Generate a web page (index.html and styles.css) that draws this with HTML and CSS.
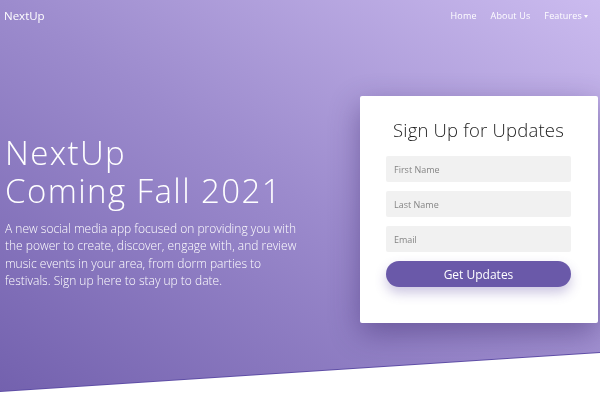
FILE: index.html
```html
<!DOCTYPE html>
<html>
<head>
<meta charset="utf-8">
<link rel="stylesheet" href="styles.css">
</head>
<body>
<div class="hero-wrap">
  <header class="hero">
    <nav class="navbar">
      <a class="brand">NextUp</a>
      <ul class="nav-links">
        <li>Home</li>
        <li>About Us</li>
        <li class="dropdown">Features<span class="caret"></span></li>
      </ul>
    </nav>
    <div class="hero-body">
      <div class="intro">
        <h1 class="title"><span class="line">NextUp</span><span class="line">Coming Fall 2021</span></h1>
        <p class="lead">A new social media app focused on providing you with the power to create, discover, engage with, and review music events in your area, from dorm parties to festivals. Sign up here to stay up to date.</p>
      </div>
      <form class="card">
        <h2 class="card-title">Sign Up for Updates</h2>
        <div class="field">First Name</div>
        <div class="field">Last Name</div>
        <div class="field">Email</div>
        <div class="btn">Get Updates</div>
      </form>
    </div>
  </header>
</div>
</body>
</html>
```

FILE: styles.css
```css
html, body {
  margin: 0;
  padding: 0;
  background: #ffffff;
  font-family: "Open Sans", "DejaVu Sans", sans-serif;
}
.hero-wrap {
  filter: drop-shadow(0 1px 0 #5f4ea6);
}
.hero {
  height: 392px;
  background: linear-gradient(to top right, #7361ae 0%, #9c8bcd 50%, #cbbbef 100%);
  clip-path: polygon(0 0, 100% 0, 100% 352px, 0 391px);
  color: #ffffff;
}
.navbar {
  display: flex;
  align-items: center;
  justify-content: space-between;
  height: 30px;
  padding: 0 12px 0 4px;
}
.brand {
  font-size: 11.5px;
  font-weight: 400;
}
.nav-links {
  display: flex;
  gap: 14px;
  list-style: none;
  margin: 0;
  padding: 0;
  font-size: 9px;
  letter-spacing: 0.15px;
}
.caret {
  display: inline-block;
  width: 0;
  height: 0;
  border-left: 2.5px solid transparent;
  border-right: 2.5px solid transparent;
  border-top: 3px solid #ffffff;
  vertical-align: middle;
  margin-left: 2px;
}
.hero-body {
  display: grid;
  grid-template-columns: 1fr 238px;
  column-gap: 20px;
  padding: 66px 2px 0 5px;
}
.intro {
  padding-top: 38px;
}
.title {
  margin: 0;
  font-size: 33px;
  font-weight: 300;
  letter-spacing: 1.4px;
}
.line {
  display: block;
  line-height: 38px;
}
.lead {
  margin: 10px 0 0;
  font-size: 12px;
  line-height: 17.3px;
  font-weight: 300;
  max-width: 300px;
}
.card {
  background: #ffffff;
  border-radius: 2px;
  box-shadow: 0 10px 30px rgba(50, 30, 100, 0.45);
  padding: 22px 27px 36px 26px;
  display: flex;
  flex-direction: column;
  gap: 9px;
  color: #222222;
}
.card-title {
  margin: 0 0 5px;
  font-size: 18.5px;
  font-weight: 300;
  text-align: center;
  line-height: 24px;
  letter-spacing: 0.2px;
}
.field {
  height: 26px;
  background: #f1f1f1;
  border-radius: 2px;
  font-size: 9px;
  color: #858585;
  display: flex;
  align-items: center;
  padding-left: 8px;
}
.btn {
  height: 26px;
  border-radius: 13px;
  background: #6a59a9;
  color: #ffffff;
  font-size: 12px;
  display: flex;
  align-items: center;
  justify-content: center;
  box-shadow: 0 6px 12px rgba(90, 70, 160, 0.3);
}
```
